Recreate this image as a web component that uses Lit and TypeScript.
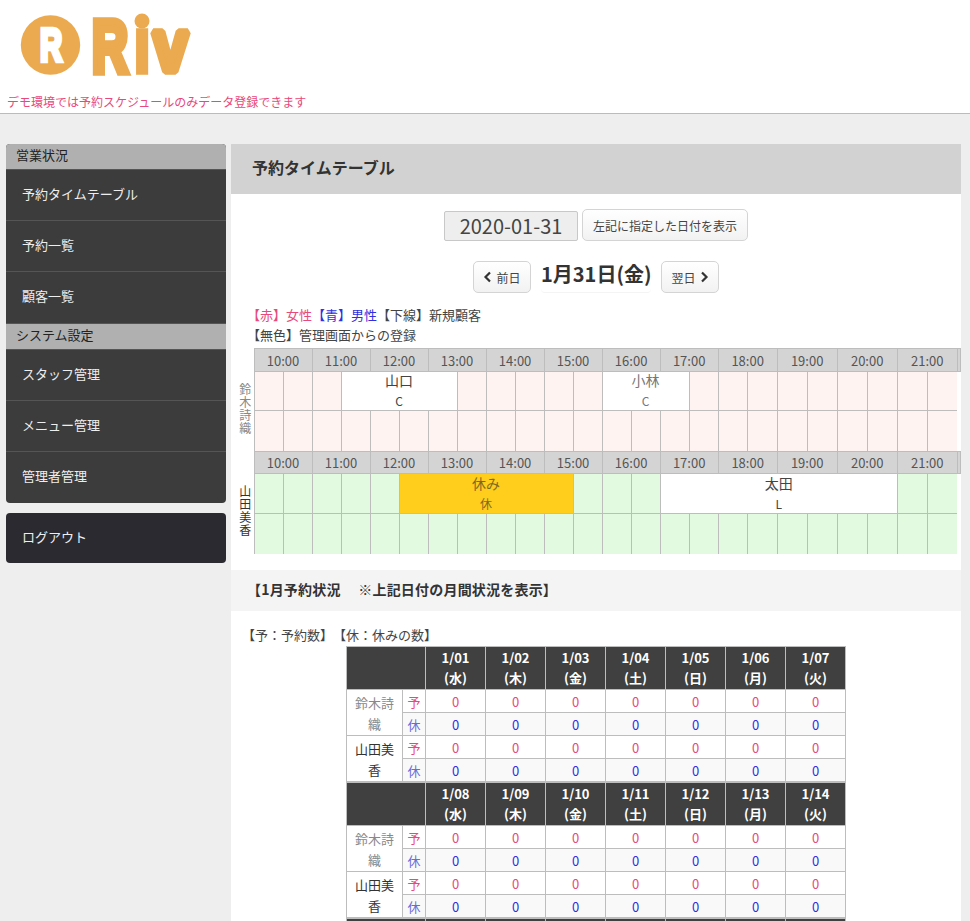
import { LitElement, css, html } from 'lit';
import { customElement } from 'lit/decorators.js';

const HOURS = [10, 11, 12, 13, 14, 15, 16, 17, 18, 19, 20, 21];
// half hour columns, the last ones come out 1px wider in the original table
const SLOT_WIDTHS = [...Array(17).fill(29), ...Array(7).fill(30)];

interface Booking { start: number; span: number; name: string; code: string; off?: boolean; muted?: boolean }

const STAFF: { name: string; tone: string; group: string; bookings: Booking[] }[] = [
  {
    name: '鈴木詩織',
    tone: 'pink',
    group: 'upper',
    bookings: [
      { start: 3, span: 4, name: '山口', code: 'C' },
      { start: 12, span: 3, name: '小林', code: 'C', muted: true },
    ],
  },
  {
    name: '山田美香',
    tone: 'green',
    group: 'lower',
    bookings: [
      { start: 5, span: 6, name: '休み', code: '休', off: true },
      { start: 14, span: 8, name: '太田', code: 'L' },
    ],
  },
];

const WEEKDAYS = ['水', '木', '金', '土', '日', '月', '火'];

@customElement('app-root')
export class AppRoot extends LitElement {
  static styles = css`
    :host {
      display: block;
      height: 921px;
      overflow: hidden;
      background: #eeeeee;
      color: #333333;
      font-family: "Noto Sans CJK JP", "Noto Sans", sans-serif;
      font-size: 13px;
      text-spacing-trim: space-all;
    }

    .top {
      height: 113px;
      background: #ffffff;
      border-bottom: 1px solid #bbbbbb;
    }

    .logo {
      display: block;
      width: 210px;
      height: 90px;
    }

    .logo text {
      font-family: "Liberation Sans", sans-serif;
      font-weight: 700;
      stroke-linejoin: miter;
    }

    .logo text.soft {
      stroke-linejoin: bevel;
    }

    .demo {
      margin: 5px 0 0 7px;
      font-size: 12px;
      line-height: 14px;
      color: #e8487c;
    }

    .page {
      display: flex;
      align-items: flex-start;
      gap: 5px;
      padding: 30px 9px 0 6px;
    }

    .side {
      flex: 0 0 220px;
      display: flex;
      flex-direction: column;
      gap: 10px;
    }

    .menu {
      border-radius: 4px;
      overflow: hidden;
      background: #3c3c3c;
    }

    .menu-head {
      height: 25px;
      line-height: 22px;
      padding-left: 10px;
      background: #b0b0b0;
      color: #222222;
      font-size: 13px;
      border-bottom: 1px solid #555555;
    }

    .menu-head.next {
      border-top: 1px solid #555555;
    }

    .menu a {
      display: block;
      height: 50px;
      line-height: 48px;
      padding-left: 16px;
      color: #eeeeee;
      font-size: 13px;
      border-bottom: 1px solid #555555;
    }

    .menu a.last {
      height: 51px;
      border-bottom: 0;
    }

    .logout {
      background: #2b2a30;
    }

    .menu.logout a.last {
      height: 50px;
    }

    .main {
      flex: 1;
      background: #ffffff;
      min-width: 0;
    }

    .main-head {
      height: 50px;
      line-height: 47px;
      padding-left: 21px;
      background: #d2d2d2;
      font-size: 16px;
      font-weight: 700;
    }

    .date-row {
      display: flex;
      justify-content: center;
      align-items: flex-start;
      gap: 4px;
      padding-top: 15px;
    }

    .date-input {
      width: 134px;
      height: 30px;
      margin-top: 2px;
      box-sizing: border-box;
      line-height: 28px;
      text-align: center;
      background: #eeeeee;
      border: 1px solid #c8c8c8;
      border-radius: 2px;
      font-size: 20px;
      color: #444444;
    }

    .btn {
      display: flex;
      align-items: center;
      justify-content: center;
      box-sizing: border-box;
      height: 32px;
      font-size: 12px;
      color: #444444;
      background: linear-gradient(#ffffff, #f2f2f2);
      border: 1px solid #d4d4d4;
      border-radius: 5px;
    }

    .show {
      width: 166px;
    }

    .nav-row {
      display: flex;
      justify-content: center;
      align-items: flex-start;
      gap: 10px;
      padding-top: 20px;
    }

    .nav {
      width: 58px;
      gap: 4px;
    }

    .nav svg {
      width: 9px;
      height: 12px;
    }

    .today {
      width: 110px;
      height: 32px;
      line-height: 26px;
      text-align: center;
      white-space: nowrap;
      font-size: 20px;
      font-weight: 700;
      color: #333333;
      border-bottom: 1px solid #f4f4f4;
      border-radius: 4px;
      box-sizing: border-box;
    }

    .legend {
      padding: 12px 0 3px 16px;
      font-size: 13px;
      line-height: 20px;
      color: #444444;
    }

    .red {
      color: #e8487c;
    }

    .blue {
      color: #3030e0;
    }

    .schedule {
      width: 723px;
      margin-left: 6px;
      border-collapse: collapse;
      table-layout: fixed;
      font-size: 13px;
    }

    .schedule th,
    .schedule td {
      padding: 0;
      border: 1px solid #bdbdbd;
      text-align: center;
      font-weight: 400;
    }

    .schedule .staff {
      border: 0;
      border-right: 1px solid #bdbdbd;
      font-size: 12px;
      line-height: 13px;
      color: #888888;
    }

    .schedule .staff.green {
      color: #333333;
    }

    .staff span {
      display: block;
      width: 12px;
      margin: 0 auto 8px;
    }

    .schedule .hour {
      background: #d4d4d4;
      color: #555555;
    }

    .upper .hour {
      height: 22px;
    }

    .lower .hour {
      height: 21px;
    }

    .schedule .end {
      background: #d4d4d4;
    }

    .schedule .gutter {
      border: 0;
    }

    .slot {
      height: 40px;
    }

    /* the grid stays open on its right edge and under the last row */
    .schedule td.slot:nth-last-child(2) {
      border-right: 0;
    }

    .lower tr:last-child td {
      border-bottom: 0;
    }

    .upper .first .slot,
    .upper .first .booking {
      height: 38px;
    }

    .lower .first .slot,
    .lower .first .booking {
      height: 39px;
    }

    .slot.pink {
      background: #fff3f2;
    }

    .slot.green {
      background: #e2fae0;
    }

    .schedule .booking {
      background: #ffffff;
      color: #444444;
    }

    .schedule .booking.muted {
      color: #777777;
    }

    .schedule .booking.off {
      background: #ffcd1c;
      color: #7d6a20;
    }

    .booking b {
      display: block;
      font-weight: 400;
      font-size: 14px;
      line-height: 17px;
    }

    .booking i {
      display: block;
      margin-bottom: -3px;
      font-style: normal;
      font-size: 12px;
      line-height: 24px;
    }

    .month-head {
      margin-top: 16px;
      height: 41px;
      line-height: 38px;
      padding-left: 16px;
      background: #f4f4f4;
      font-size: 14px;
      font-weight: 700;
      letter-spacing: 0.2px;
    }

    .key {
      padding: 15px 0 0 11px;
      font-size: 13px;
      line-height: 18px;
      color: #444444;
    }

    .month {
      width: 499px;
      margin: 2px 0 0 115px;
      border-collapse: collapse;
      table-layout: fixed;
      font-size: 13px;
    }

    .month th,
    .month td {
      padding: 0;
      border: 1px solid #bdbdbd;
      text-align: center;
    }

    .month th {
      height: 42px;
      line-height: 20px;
      background: #404040;
      color: #ffffff;
      font-weight: 700;
    }

    .month tr.later th {
      border-top: 2px solid #bdbdbd;
    }

    .month td {
      height: 22px;
      font-weight: 400;
    }

    .month .who {
      line-height: 21px;
      padding: 0 8px;
      color: #888888;
    }

    .month .who.dark {
      color: #333333;
    }

    .month tr.rest td:not(.who) {
      background: #f9f9f9;
    }

    .month .kind.red,
    .month .num.red {
      color: #e8487c;
    }

    .month .kind.blue {
      color: #6a6ad8;
    }

    .month .num.blue {
      color: #3030e0;
    }
  `;

  private renderSlots(tone: string, bookings: Booking[]) {
    const cells = [];
    for (let i = 0; i < 24; i++) {
      const b = bookings.find((x) => x.start === i);
      if (b) {
        cells.push(html`<td class="booking ${b.off ? 'off' : ''} ${b.muted ? 'muted' : ''}" colspan=${b.span}>
          <b>${b.name}</b><i>${b.code}</i>
        </td>`);
        i += b.span - 1;
      } else {
        cells.push(html`<td class="slot ${tone}"></td>`);
      }
    }
    return cells;
  }

  private renderStaff(s: (typeof STAFF)[number]) {
    return html`
      <tbody class=${s.group}>
        <tr>
          <td class="staff"></td>
          ${HOURS.map((h) => html`<th class="hour" colspan="2">${h}:00</th>`)}
          <th class="end"></th>
        </tr>
        <tr class="first">
          <td class="staff ${s.tone}" rowspan="2"><span>${s.name}</span></td>
          ${this.renderSlots(s.tone, s.bookings)}
          <td class="gutter"></td>
        </tr>
        <tr>
          ${this.renderSlots(s.tone, [])}
          <td class="gutter"></td>
        </tr>
      </tbody>
    `;
  }

  private renderWeek(first: number) {
    const days = WEEKDAYS.map((w, i) => ({ w, d: String(first + i).padStart(2, '0') }));
    const rows = STAFF.map((s, n) => html`
      <tr>
        <td class="who ${n ? 'dark' : ''}" rowspan="2">${s.name}</td>
        <td class="kind red">予</td>
        ${days.map(() => html`<td class="num red">0</td>`)}
      </tr>
      <tr class="rest">
        <td class="kind blue">休</td>
        ${days.map(() => html`<td class="num blue">0</td>`)}
      </tr>
    `);
    return html`
      <tr class=${first > 1 ? 'later' : ''}>
        <th colspan="2"></th>
        ${days.map((x) => html`<th>1/${x.d}<br />(${x.w})</th>`)}
      </tr>
      ${rows}
    `;
  }

  render() {
    return html`
      <div class="top">
        <svg class="logo" viewBox="0 0 210 90">
          <circle cx="50.5" cy="45" r="29.7" fill="#ebaa4f"></circle>
          <text transform="translate(51 61) scale(0.77 1.17)" text-anchor="middle" font-size="40" fill="#ffffff" stroke="#ffffff" stroke-width="4">R</text>
          <g fill="#ebaa4f" stroke="#ebaa4f" stroke-width="6">
            <text transform="translate(92 71.6) scale(0.83 1.22)" font-size="60">R</text>
            <text transform="translate(142 71.3) scale(0.85 1.25)" text-anchor="middle" font-size="60">ı</text>
            <text class="soft" transform="translate(170.5 71.3) scale(1.05 1.23)" text-anchor="middle" font-size="60">v</text>
          </g>
          <circle cx="142" cy="21" r="7.5" fill="#ebaa4f"></circle>
        </svg>
        <div class="demo">デモ環境では予約スケジュールのみデータ登録できます</div>
      </div>
      <div class="page">
        <nav class="side">
          <div class="menu">
            <div class="menu-head">営業状況</div>
            <a>予約タイムテーブル</a>
            <a>予約一覧</a>
            <a class="last">顧客一覧</a>
            <div class="menu-head next">システム設定</div>
            <a>スタッフ管理</a>
            <a>メニュー管理</a>
            <a class="last">管理者管理</a>
          </div>
          <div class="menu logout"><a class="last">ログアウト</a></div>
        </nav>
        <main class="main">
          <div class="main-head">予約タイムテーブル</div>
          <div class="date-row">
            <div class="date-input">2020-01-31</div>
            <div class="btn show">左記に指定した日付を表示</div>
          </div>
          <div class="nav-row">
            <div class="btn nav">
              <svg viewBox="0 0 9 12"><path d="M7 1.5 2.5 6 7 10.5" fill="none" stroke="#333" stroke-width="2.2"></path></svg>前日
            </div>
            <div class="today">1月31日(金)</div>
            <div class="btn nav">
              翌日<svg viewBox="0 0 9 12"><path d="M2 1.5 6.5 6 2 10.5" fill="none" stroke="#333" stroke-width="2.2"></path></svg>
            </div>
          </div>
          <div class="legend">
            <div><span class="red">【赤】女性</span><span class="blue">【青】男性</span>【下線】新規顧客</div>
            <div>【無色】管理画面からの登録</div>
          </div>
          <table class="schedule">
            <colgroup>
              <col style="width:17px" />
              ${SLOT_WIDTHS.map((w) => html`<col style="width:${w}px" />`)}
              <col style="width:3px" />
            </colgroup>
            ${STAFF.map((s) => this.renderStaff(s))}
          </table>
          <div class="month-head">【1月予約状況　 ※上記日付の月間状況を表示】</div>
          <div class="key">【予：予約数】【休：休みの数】</div>
          <table class="month">
            <colgroup>
              <col style="width:56px" />
              <col style="width:23px" />
              ${WEEKDAYS.map(() => html`<col style="width:60px" />`)}
            </colgroup>
            ${[1, 8].map((d) => this.renderWeek(d))}
            <tr class="later">
              <th colspan="2"></th>
              ${WEEKDAYS.map(() => html`<th></th>`)}
            </tr>
          </table>
        </main>
      </div>
    `;
  }
}
